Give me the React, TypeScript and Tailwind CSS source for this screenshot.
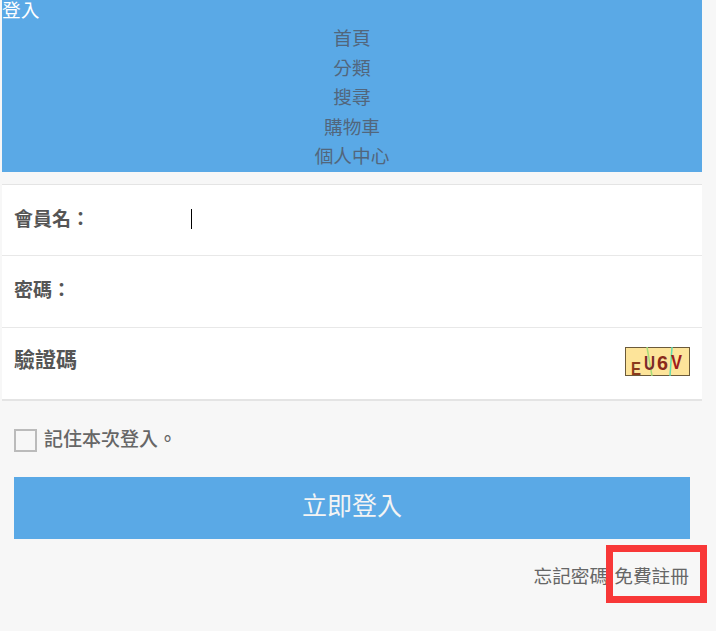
const font = "font-['Liberation_Serif','Noto_Sans_CJK_TC',sans-serif]";

const navItems = ["首頁", "分類", "搜尋", "購物車", "個人中心"];

const Captcha = () => (
  <svg width="65" height="29" viewBox="0 0 65 29" className="block">
    <rect x="0.5" y="0.5" width="64" height="28" fill="#fde49a" stroke="#6b5a3a" />
    <line x1="22" y1="0" x2="27" y2="29" stroke="#a5dc7a" strokeWidth="1.5" />
    <line x1="47" y1="0" x2="45" y2="29" stroke="#62dcb0" strokeWidth="1.5" />
    <text x="6" y="28" fontSize="19" fontFamily="Liberation Sans" textLength="10" lengthAdjust="spacingAndGlyphs" fill="#8a3a1c">E</text>
    <text x="19" y="23" fontSize="20" fontFamily="Liberation Sans" fontWeight="bold" textLength="11" lengthAdjust="spacingAndGlyphs" fill="#7a2a2a">U</text>
    <text x="32" y="23" fontSize="20" fontFamily="Liberation Sans" fontWeight="bold" textLength="11" lengthAdjust="spacingAndGlyphs" fill="#8a2a1a">6</text>
    <text x="46" y="22" fontSize="20" fontFamily="Liberation Sans" fontWeight="bold" textLength="11" lengthAdjust="spacingAndGlyphs" fill="#a01c1c">V</text>
  </svg>
);

export default function App() {
  return (
    <div className="relative h-[631px] w-[716px] overflow-hidden bg-[#f7f7f7] font-['Noto_Sans_CJK_TC',sans-serif]">
      <header className="ml-[2px] h-[172px] w-[700px] bg-[#5aa9e6] text-[18.7px]">
        <a className="block h-[22px] leading-[18px] text-white">登入</a>
        <nav className="flex flex-col items-center text-[#52667c]">
          {navItems.map((item) => (
            <a key={item} className="block h-[29.6px] leading-[29.6px]">
              {item}
            </a>
          ))}
        </nav>
      </header>

      <div className={`ml-[2px] mt-[12px] w-[700px] border-t border-b-2 border-[#e4e4e4] bg-white text-[19px] font-semibold text-[#555] ${font}`}>
        <div className="flex h-[70px] items-center pl-[12px]">
          <span className="w-[177px]">會員名：</span>
          <span className="mb-[2px] h-[20px] w-px bg-black" />
        </div>
        <div className="flex h-[72px] items-center border-t border-[#e8e8e8] pl-[12px]">
          <span>密碼：</span>
        </div>
        <div className="flex h-[72px] items-center justify-between border-t border-[#e8e8e8] pb-[5px] pl-[12px] pr-[12px] text-[21px]">
          <span>驗證碼</span>
          <Captcha />
        </div>
      </div>

      <label className={`ml-[14px] mt-[28px] flex h-[23px] items-center gap-[7px] text-[19px] font-medium text-[#666] ${font}`}>
        <span className="h-[23px] w-[23px] border-2 border-[#bbb]" />
        記住本次登入。
      </label>

      <button className="ml-[14px] mt-[25px] block h-[62px] w-[676px] bg-[#5aa9e6] pb-[6px] text-[25px] text-[#f4f4f4]">
        立即登入
      </button>

      <div className="mt-[22px] flex justify-end gap-[6px] pr-[27px] text-[18.7px] leading-[28px] text-[#666]">
        <a>忘記密碼</a>
        <a>免費註冊</a>
      </div>

      <div className="absolute left-[606px] top-[545px] h-[58px] w-[101px] border-[7px] border-[#f83838]" />
    </div>
  );
}
